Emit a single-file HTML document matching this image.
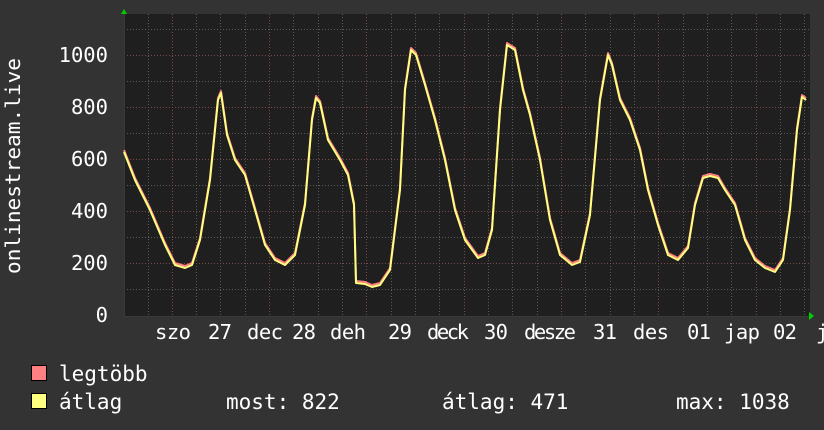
<!DOCTYPE html>
<html><head><meta charset="utf-8"><style>html,body{margin:0;padding:0;background:#333}svg{display:block}</style></head><body>
<svg width="824" height="430" xmlns="http://www.w3.org/2000/svg" font-family="DejaVu Sans Mono, Liberation Mono, monospace">
<rect width="824" height="430" fill="#333333"/>
<rect x="124" y="14" width="686" height="302" fill="#1f1f1f"/>
<g stroke="#5a5a5a" stroke-dasharray="1,2" stroke-width="1">
<path d="M124 289.5H810M124 237.5H810M124 185.5H810M124 133.5H810M124 81.5H810M124 29.5H810"/>
<path d="M148.5 14V316M196.5 14V316M220.5 14V316M245.5 14V316M293.5 14V316M318.5 14V316M342.5 14V316M391.5 14V316M415.5 14V316M439.5 14V316M488.5 14V316M512.5 14V316M537.5 14V316M585.5 14V316M610.5 14V316M634.5 14V316M683.5 14V316M707.5 14V316M731.5 14V316M780.5 14V316M804.5 14V316"/>
</g>
<g stroke="#7a4a4a" stroke-dasharray="1,2" stroke-width="1">
<path d="M124 263.5H810M124 211.5H810M124 159.5H810M124 107.5H810M124 55.5H810"/>
<path d="M172.5 14V316M269.5 14V316M366.5 14V316M464.5 14V316M561.5 14V316M658.5 14V316M756.5 14V316"/>
</g>
<path d="M124 316.5H812M124.5 14V316" stroke="#3a3a3a"/>
<path d="M809 312l5 4-5 4z" fill="#00d000"/>
<path d="M121 14l3-5 3 5z" fill="#00d000"/>
<g fill="#fff" font-size="20.5" text-anchor="end">
<text x="108" y="62">1000</text><text x="108" y="114">800</text><text x="108" y="166">600</text><text x="108" y="218">400</text><text x="108" y="270">200</text><text x="108" y="322">0</text>
</g>
<text transform="translate(20,166) rotate(-90)" fill="#fff" font-size="20.5" text-anchor="middle" textLength="216" lengthAdjust="spacingAndGlyphs">onlinestream.live</text>
<g fill="#fff" font-size="20.5" lengthAdjust="spacingAndGlyphs">
<text x="155" y="339" textLength="36">szo</text>
<text x="208" y="339" textLength="24">27</text>
<text x="247" y="339" textLength="36">dec</text>
<text x="292" y="339" textLength="24">28</text>
<text x="330" y="339" textLength="36">deh</text>
<text x="388" y="339" textLength="24">29</text>
<text x="427" y="339" textLength="42">deck</text>
<text x="484" y="339" textLength="24">30</text>
<text x="524" y="339" textLength="52">desze</text>
<text x="593" y="339" textLength="24">31</text>
<text x="633" y="339" textLength="36">des</text>
<text x="687" y="339" textLength="24">01</text>
<text x="724" y="339" textLength="36">jap</text>
<text x="773" y="339" textLength="24">02</text>
<text x="816" y="339">j</text>
</g>
<g stroke-linejoin="round" fill="none" stroke-width="2">
<polyline stroke="#ff8080" transform="translate(0,-2)" points="124,152 135,180 150,210 165,245 175,265 185,268 192,265 200,240 210,180 218,100 221,93 227,135 235,160 245,175 255,210 265,245 275,260 285,265 295,255 305,205 312,120 316,98 320,103 328,140 340,160 348,175 354,205 356,283 365,284 372,287 380,285 390,270 400,190 405,90 411,50 416,55 425,85 435,120 445,160 455,210 465,240 478,258 485,255 492,230 500,110 507,45 515,50 523,90 530,115 540,160 550,220 560,255 572,265 580,262 590,215 600,100 608,55 612,65 620,100 630,120 640,150 648,190 658,225 668,255 678,260 688,248 695,205 703,178 710,176 718,178 725,190 735,205 745,240 755,260 765,268 775,272 783,260 790,210 797,130 802,97 806,100"/>
<polyline stroke="#ffff80" points="124,152 135,180 150,210 165,245 175,265 185,268 192,265 200,240 210,180 218,100 221,93 227,135 235,160 245,175 255,210 265,245 275,260 285,265 295,255 305,205 312,120 316,98 320,103 328,140 340,160 348,175 354,205 356,283 365,284 372,287 380,285 390,270 400,190 405,90 411,50 416,55 425,85 435,120 445,160 455,210 465,240 478,258 485,255 492,230 500,110 507,45 515,50 523,90 530,115 540,160 550,220 560,255 572,265 580,262 590,215 600,100 608,55 612,65 620,100 630,120 640,150 648,190 658,225 668,255 678,260 688,248 695,205 703,178 710,176 718,178 725,190 735,205 745,240 755,260 765,268 775,272 783,260 790,210 797,130 802,97 806,100"/>
</g>
<rect x="31.5" y="365.5" width="15" height="15" fill="#ff8080" stroke="#000"/>
<rect x="31.5" y="393.5" width="15" height="15" fill="#ffff80" stroke="#000"/>
<g fill="#fff" font-size="21">
<text x="59" y="381">legtöbb</text>
<text x="59" y="409">átlag</text>
<text x="226" y="409">most: 822</text>
<text x="442" y="409">átlag: 471</text>
<text x="676" y="409">max: 1038</text>
</g>
</svg>
</body></html>
